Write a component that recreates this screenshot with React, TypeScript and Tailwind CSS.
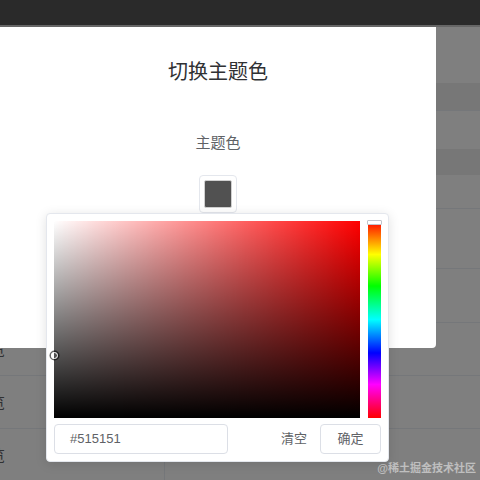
const rows = [
  { h: 'h-[56px]', tone: 'bg-white', line: false },
  { h: 'h-[28px]', tone: 'bg-[#eeeeee]', line: true },
  { h: 'h-[38px]', tone: 'bg-white', line: false },
  { h: 'h-[26px]', tone: 'bg-[#eeeeee]', line: false },
  { h: 'h-[34px]', tone: 'bg-white', line: true },
  { h: 'h-[60px]', tone: 'bg-white', line: true },
  { h: 'h-[54px]', tone: 'bg-white', line: true },
  { h: 'h-[53px]', tone: 'bg-white', line: true, text: '览' },
  { h: 'h-[53px]', tone: 'bg-white', line: true, text: '览' },
  { h: 'h-[53px]', tone: 'bg-white', line: false, text: '览' },
];

export default function App() {
  return (
    <div className="relative h-[480px] w-[480px] overflow-hidden bg-white font-['Liberation_Sans','Noto_Sans_CJK_SC',sans-serif]">
      {/* Top bar */}
      <div className="h-[25px] bg-[#2a2a2a]" />
      <div className="h-[2px] bg-[#cccccc]" />

      {/* Table behind the mask */}
      <div className="flex flex-col">
        {rows.map((r, i) => (
          <div
            key={i}
            className={`${r.h} ${r.tone} ${r.line ? 'border-b border-[#ebeef5]' : ''} flex items-center overflow-hidden`}
          >
            {r.text && (
              <>
                <span className="-ml-[10px] w-[175px] shrink-0 border-r border-[#ebeef5] text-[15px] leading-[53px] text-[#606266]">
                  {r.text}
                </span>
                <span className="ml-[30px] w-[105px] shrink-0 text-[15px] text-[#606266]">上海市普陀</span>
                <span className="text-[15px] text-[#606266]">金沙江</span>
              </>
            )}
          </div>
        ))}
      </div>

      {/* Mask */}
      <div className="absolute inset-x-0 top-[25px] bottom-0 bg-black/50" />

      {/* Dialog */}
      <div className="absolute left-0 top-[27px] flex h-[321px] w-[436px] flex-col items-center rounded-br-[4px] bg-white pt-[32px]">
        <h2 className="text-[20px] font-normal leading-[26px] text-[#303133]">切换主题色</h2>
        <div className="mt-[47px] text-[15px] leading-[22px] text-[#606266]">主题色</div>
        <div className="mt-[21px] flex h-[38px] w-[38px] items-center justify-center rounded-[4px] border border-[#e4e7ed] bg-white">
          <div className="h-[28px] w-[28px] rounded-[2px] border border-[#d0d0d0] bg-[#515151]" />
        </div>
      </div>

      {/* Color picker dropdown */}
      <div className="absolute left-[46px] top-[213px] w-[343px] rounded-[4px] border border-[#e4e7ed] bg-white p-[7px] shadow-[0_2px_12px_rgba(0,0,0,0.12)]">
        <div className="flex gap-[8px]">
          <div className="relative h-[197px] w-[306px] bg-[#ff0000]">
            <div className="absolute inset-0 bg-gradient-to-r from-white to-white/0" />
            <div className="absolute inset-0 bg-gradient-to-b from-black/0 to-black" />
            <div className="absolute left-[-3.5px] top-[130.5px] h-[7px] w-[7px] rounded-full border border-white shadow-[0_0_0_1.5px_rgba(0,0,0,0.6)]" />
          </div>
          <div className="relative h-[197px] w-[13px] bg-[linear-gradient(to_bottom,#f00_0%,#ff0_17%,#0f0_33%,#0ff_50%,#00f_67%,#f0f_83%,#f00_100%)]">
            <div className="absolute -left-[1px] -top-[1px] h-[5px] w-[15px] rounded-[1px] border border-[#c0c4cc] bg-white" />
          </div>
        </div>
        <div className="mt-[6px] flex items-center">
          <div className="flex h-[30px] w-[174px] items-center rounded-[4px] border border-[#dcdfe6] px-[15px] text-[13px] text-[#606266]">
            #515151
          </div>
          <div className="ml-auto mr-[13px] text-[13px] text-[#606266]">清空</div>
          <button className="h-[30px] w-[61px] rounded-[4px] border border-[#dcdfe6] bg-white text-[13px] text-[#606266]">
            确定
          </button>
        </div>
      </div>

      {/* Watermark */}
      <div className="absolute bottom-[5px] right-[4px] text-[11px] font-bold leading-[14px] text-white/50">@稀土掘金技术社区</div>
    </div>
  );
}
